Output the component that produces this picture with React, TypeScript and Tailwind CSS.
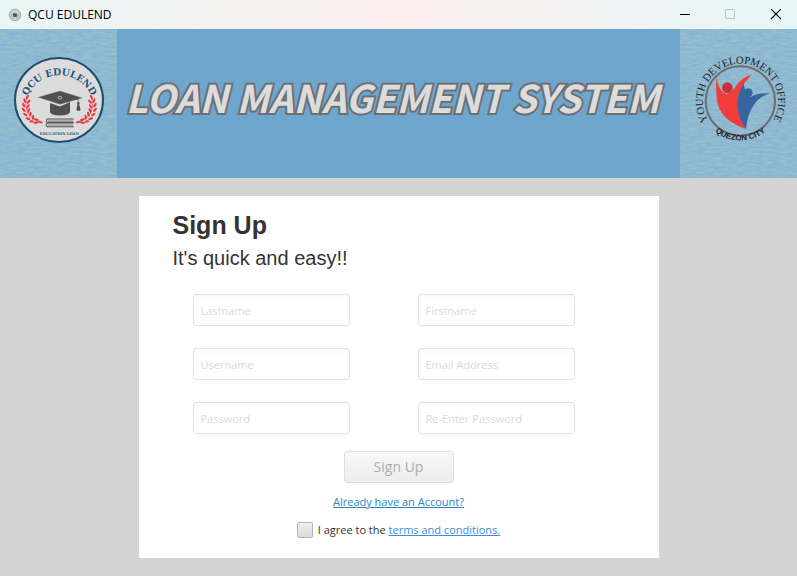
import type { ReactNode } from "react";

const uiFont = "font-['Open_Sans','Noto_Sans',sans-serif]";

function Texture({ id }: { id: string }) {
  return (
    <svg className="absolute inset-0 h-full w-full" aria-hidden="true">
      <filter id={id} x="0" y="0" width="100%" height="100%" colorInterpolationFilters="sRGB">
        <feTurbulence type="fractalNoise" baseFrequency="0.12 0.45" numOctaves="2" seed="4" />
        <feColorMatrix values="0 0 0 0 0.64  0 0 0 0 0.76  0 0 0 0 0.8  0 1.3 0 0 -0.25" />
      </filter>
      <rect width="100%" height="100%" filter={`url(#${id})`} />
    </svg>
  );
}

function Laurel() {
  const leaves = [
    [82, 166, -60], [74, 177, -110], [86, 180, -50], [71, 190, -120], [84, 194, -55],
    [71, 204, -135], [86, 206, -65], [76, 218, -150], [91, 217, -75], [84, 230, -165],
    [99, 226, -80], [95, 238, -175], [109, 233, 15], [108, 242, 175], [121, 240, 15],
  ];
  return (
    <g fill="#e63a42">
      <path d="M84 162 C70 195 80 228 124 242" fill="none" stroke="#e63a42" strokeWidth="2" />
      {leaves.map(([x, y, r]) => (
        <ellipse key={`${x}-${y}`} cx={x} cy={y} rx="7.5" ry="3.4" transform={`rotate(${r} ${x} ${y})`} />
      ))}
    </g>
  );
}

function EdulendLogo({ className }: { className: string }) {
  return (
    <svg viewBox="42 48 270 254" preserveAspectRatio="none" className={className} role="img" aria-label="QCU Edulend">
      <ellipse cx="177" cy="175" rx="132" ry="124" fill="#dcdcdc" stroke="#1e4f70" strokeWidth="6" />
      <path id="edulend-arc" d="M72 206 A106 104 0 0 1 284 206" fill="none" />
      <text fill="#1e567d" fontSize="28" fontWeight="700" className="font-['DejaVu_Serif',serif]">
        <textPath href="#edulend-arc" startOffset="50%" textAnchor="middle">QCU EDULEND</textPath>
      </text>
      <Laurel />
      <g transform="translate(356 0) scale(-1 1)"><Laurel /></g>
      <path d="M150 184 L180 194 L210 181 V210 Q208 221 180 221 Q152 221 150 210Z" fill="#505052" />
      <path d="M112 167 L180 148 L249 169 L180 188Z" fill="#505052" stroke="#dcdcdc" strokeWidth="1" />
      <ellipse cx="180" cy="168" rx="6" ry="4" fill="#505052" stroke="#dcdcdc" strokeWidth="2" />
      <path d="M185 168 L235 174 V187" fill="none" stroke="#505052" strokeWidth="2" />
      <path d="M231 182 h8 l-1 7 l4 16 q-7 4 -13 0 l3 -16Z" fill="#505052" />
      <path d="M221 231 H142 Q136 236 142 241 H221 M221 243 H142 Q135 248 142 254 H221" fill="none" stroke="#505052" strokeWidth="3" />
      <path d="M144 235 H219 M144 238 H219 M144 247 H219 M144 250 H219" stroke="#777" strokeWidth="1.5" />
      <text x="178" y="277" textAnchor="middle" fontSize="11" fontWeight="700" fill="#1e567d" className="font-['DejaVu_Serif',serif]">EDUCATION LOAN</text>
    </svg>
  );
}

function YouthLogo() {
  return (
    <svg viewBox="44 40 285 279" className="h-[93px] w-[95px]" role="img" aria-label="Youth Development Office, Quezon City">
      <path id="youth-arc" d="M108 266 A113 113 0 1 1 267 264" fill="none" />
      <path id="city-arc" d="M88 254 A125 128 0 0 0 284 254" fill="none" />
      <circle cx="186" cy="184" r="104" fill="none" stroke="#6d6e70" strokeWidth="6" />
      <text fill="#202326" fontSize="32" className="font-['Liberation_Serif',serif]">
        <textPath href="#youth-arc" startOffset="50%" textAnchor="middle">YOUTH DEVELOPMENT OFFICE</textPath>
      </text>
      <text fill="#202326" fontSize="24" fontWeight="700" className="font-['Liberation_Sans',sans-serif]">
        <textPath href="#city-arc" startOffset="50%" textAnchor="middle">QUEZON CITY</textPath>
      </text>
      <path d="M203 268 C178 240 170 195 178 170 Q184 148 196 130 C199 154 206 168 218 171 Q234 160 276 160 Q240 173 227 195 Q207 223 203 268Z" fill="#34669d" />
      <path d="M114 113 C119 140 128 159 146 163 Q163 157 177 134 Q191 113 220 105 Q198 127 187 148 C170 185 174 226 202 267 C163 255 125 230 117 188 Q112 160 114 113Z" fill="#f23b3b" />
      <circle cx="147" cy="144" r="16" fill="#ca3032" />
      <circle cx="210" cy="159" r="13" fill="#34669d" />
    </svg>
  );
}

function SidePanel({ id, children }: { id: string; children: ReactNode }) {
  return (
    <div className="relative flex w-[117px] shrink-0 items-center justify-center bg-[#82b3d2] pb-2">
      <Texture id={id} />
      <div className="relative">{children}</div>
    </div>
  );
}

function Field({ label, type = "text" }: { label: string; type?: string }) {
  return (
    <input
      type={type}
      aria-label={label}
      placeholder={label}
      className="h-8 w-[157px] rounded-[3px] border border-[#e3e3e3] bg-linear-to-b from-[#f9f9f9] to-white to-20% px-[7px] pt-px text-[11px] text-[#333] outline-none placeholder:text-[#dadada]"
    />
  );
}

export default function App() {
  return (
    <div className={`flex min-h-screen flex-col bg-[#d3d3d3] text-[#333] ${uiFont}`}>
      <div className="flex h-[29px] items-center bg-linear-to-r from-[#e8f7f6] via-[#fbeeed] to-[#e6f7f8] pl-2">
        <svg viewBox="0 0 14 14" className="mr-1.5 size-3.5" aria-hidden="true">
          <circle cx="7" cy="7" r="5.8" fill="#ccd1d5" stroke="#9ba8b1" />
          <path d="M3.5 6.5 Q3.5 10 6 10.5 M10.5 6.5 Q10.5 10 8 10.5" fill="none" stroke="#d59092" />
          <path d="M4.5 6 L7 5 L9.5 6 L8.5 9 H5.5Z" fill="#58595c" />
        </svg>
        <span className="flex-1 text-xs text-black">QCU EDULEND</span>
        <button type="button" aria-label="Minimize" className="flex h-full w-[45px] items-center justify-center">
          <svg viewBox="0 0 12 12" className="size-3" stroke="#000"><path d="M1 5.5 H11" /></svg>
        </button>
        <button type="button" aria-label="Maximize" disabled className="flex h-full w-[45px] items-center justify-center">
          <svg viewBox="0 0 12 12" className="size-3" fill="none" stroke="#b5c3c4"><rect x="1.5" y="0.5" width="9" height="9" rx="1" /></svg>
        </button>
        <button type="button" aria-label="Close" className="flex h-full w-[45px] items-center justify-center">
          <svg viewBox="0 0 12 12" className="size-3" stroke="#000" strokeWidth="1.2"><path d="M2 0 L12 10 M12 0 L2 10" /></svg>
        </button>
      </div>

      <header className="flex h-[149px] bg-[#6ea6cd]">
        <SidePanel id="grain-left"><EdulendLogo className="h-[86px] w-[90px]" /></SidePanel>
        <div className="flex min-w-0 flex-1 items-center justify-center pr-3 pb-3.5">
          <h1 className="text-[38px] font-bold whitespace-nowrap text-[#dcdcdc] italic [-webkit-text-stroke:4px_#6d7073] [paint-order:stroke_fill] font-['Noto_Sans_CJK_SC',sans-serif]">
            LOAN MANAGEMENT SYSTEM
          </h1>
        </div>
        <SidePanel id="grain-right"><div className="pl-1"><YouthLogo /></div></SidePanel>
      </header>

      <main className="flex flex-1 justify-center py-[18px]">
        <form className="flex w-[520px] flex-col bg-white px-[34px] pt-3.5" onSubmit={(e) => e.preventDefault()}>
          <h2 className="text-[25px] leading-[30px] font-bold font-['Liberation_Sans',sans-serif]">Sign Up</h2>
          <p className="text-xl leading-9 font-['Liberation_Sans',sans-serif]">It's quick and easy!!</p>
          <div className="mt-[18px] grid grid-cols-[157px_157px] gap-x-[68px] gap-y-[22px] pl-5">
            <Field label="Lastname" />
            <Field label="Firstname" />
            <Field label="Username" />
            <Field label="Email Address" />
            <Field label="Password" type="password" />
            <Field label="Re-Enter Password" type="password" />
          </div>
          <div className="mt-[17px] flex flex-col items-center">
            <button type="submit" disabled className="h-8 w-[110px] rounded-[3px] border border-[#dedede] bg-linear-to-b from-[#f8f8f8] to-[#ededed] text-sm text-[#adadad]">
              Sign Up
            </button>
            <a href="#login" className="mt-2.5 text-[11px] leading-[18px] text-[#2a86be] underline">Already have an Account?</a>
            <div className="mt-2.5 flex items-center gap-[5px] text-[11px] leading-[18px]">
              <input
                id="agree"
                type="checkbox"
                className="size-4 appearance-none rounded-[2px] border border-[#b5b5b5] bg-linear-to-b from-[#eeeeee] to-[#dadada]"
              />
              <span>
                <label htmlFor="agree">I agree to the </label>
                <a href="#terms" className="text-[#3e8ddd] underline">terms and conditions.</a>
              </span>
            </div>
          </div>
        </form>
      </main>
    </div>
  );
}
